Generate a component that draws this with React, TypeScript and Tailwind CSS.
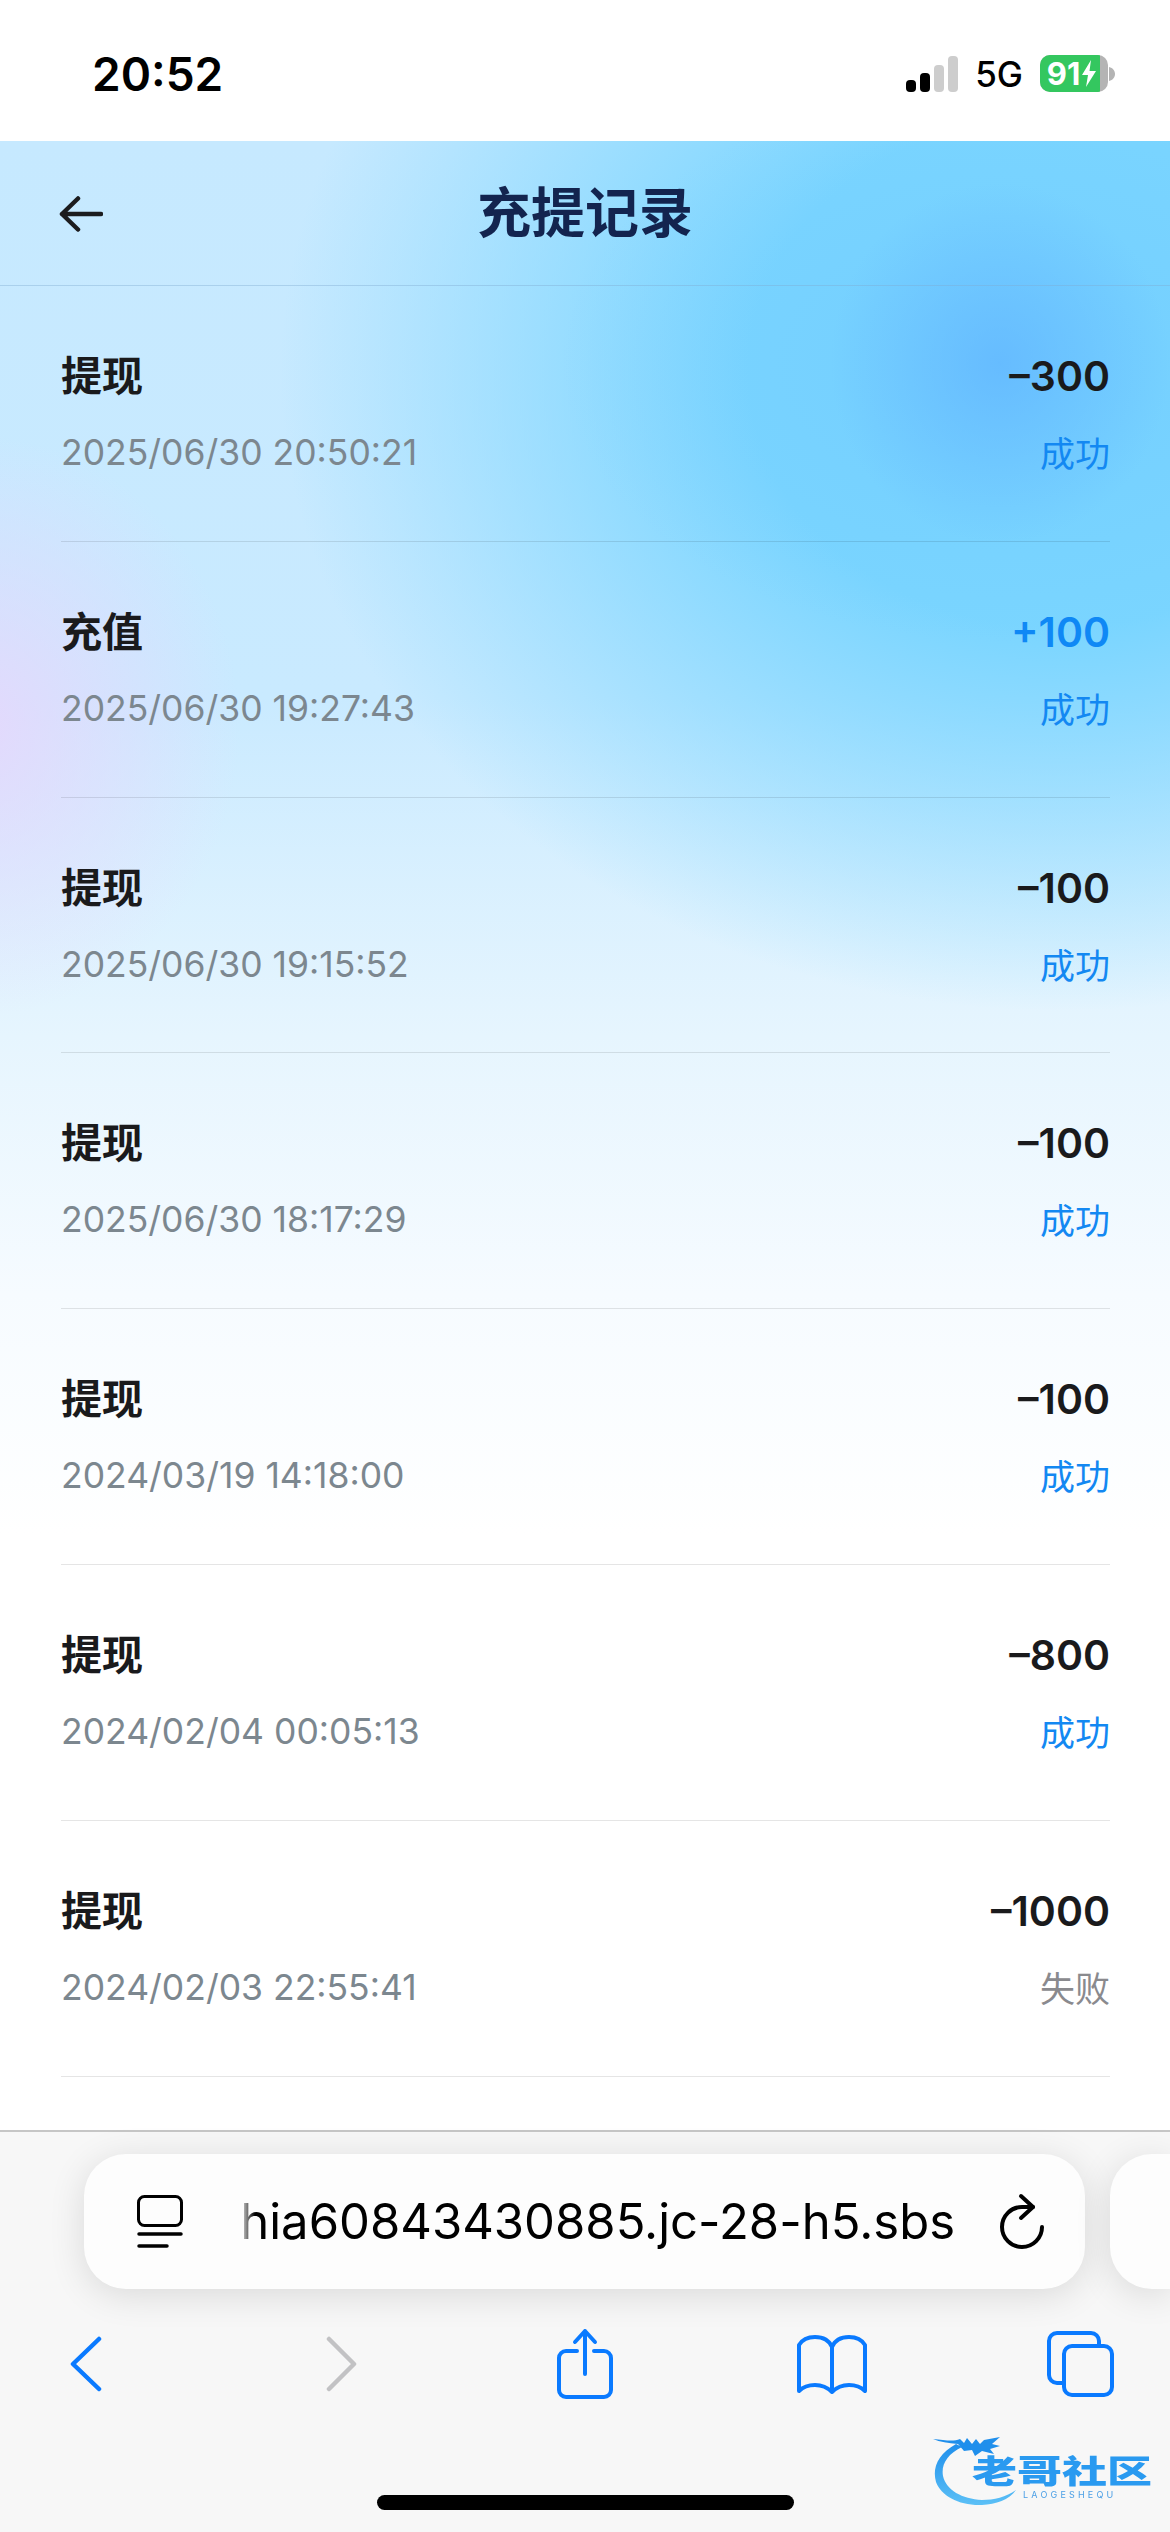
const cjk = 'font-["Noto_Sans_CJK_SC",sans-serif]';
const latin = 'font-["Inter","Noto_Sans_CJK_SC",sans-serif]';

const records = [
  { title: '提现', amount: '–300', time: '2025/06/30 20:50:21', status: '成功' },
  { title: '充值', amount: '+100', time: '2025/06/30 19:27:43', status: '成功' },
  { title: '提现', amount: '–100', time: '2025/06/30 19:15:52', status: '成功' },
  { title: '提现', amount: '–100', time: '2025/06/30 18:17:29', status: '成功' },
  { title: '提现', amount: '–100', time: '2024/03/19 14:18:00', status: '成功' },
  { title: '提现', amount: '–800', time: '2024/02/04 00:05:13', status: '成功' },
  { title: '提现', amount: '–1000', time: '2024/02/03 22:55:41', status: '失败' },
];

function StatusBar() {
  return (
    <div className={`flex h-[141px] items-start bg-white pl-[92px] pr-[55px] ${latin}`}>
      <span className="mt-[46px] text-[46px] font-semibold leading-[56px] text-black">20:52</span>
      <div className="ml-auto mt-[55px] flex items-center">
        <svg width="52" height="36" viewBox="0 0 52 36">
          <rect x="0" y="24" width="10" height="12" rx="4" fill="#000" />
          <rect x="14" y="17" width="10" height="19" rx="4" fill="#000" />
          <rect x="28" y="9" width="10" height="27" rx="4" fill="#cdcdcd" />
          <rect x="42" y="0" width="10" height="36" rx="4" fill="#cdcdcd" />
        </svg>
        <span className="ml-[17px] text-[35px] font-medium leading-[36px] text-black">5G</span>
        <div className="ml-[17px] flex items-center">
          <div className="flex h-[37px] w-[68px] overflow-hidden rounded-[10px] bg-[#b4b4b4]">
            <div className="flex w-[60px] items-center justify-center gap-[1px] bg-[#34c75f] pl-[4px]">
              <span className="text-[31px] font-bold leading-[37px] text-white">91</span>
              <svg width="16" height="27" viewBox="0 0 16 27">
                <path d="M10 0 1 15h6l-2 12 10-16H8.500z" fill="#fff" />
              </svg>
            </div>
          </div>
          <svg width="6" height="14" viewBox="0 0 6 14" className="ml-[1px]">
            <path d="M0 0c4 1 6 4 6 7s-2 6-6 7z" fill="#b4b4b4" />
          </svg>
        </div>
      </div>
    </div>
  );
}

function Header() {
  return (
    <div className="relative flex h-[145px] items-center justify-center border-b border-[#7fa9cf]/40 pb-[6px]">
      <svg
        width="44"
        height="36"
        viewBox="0 0 44 36"
        fill="none"
        stroke="#1c1c1e"
        strokeWidth="4.500"
        strokeLinecap="round"
        strokeLinejoin="round"
        className="absolute left-[59px] top-[55px]"
      >
        <path d="M19 2.500 3 18l16 15.500M3 18h39" />
      </svg>
      <h1 className={`text-[54px] font-bold leading-[64px] text-[#13244f] ${cjk}`}>充提记录</h1>
    </div>
  );
}

function RecordRow({ title, amount, time, status }: (typeof records)[number]) {
  const income = amount.startsWith('+');
  return (
    <div className="flex h-[255.800px] flex-col border-b border-[#000]/10 pt-[62px]">
      <div className="flex items-start justify-between">
        <span className={`text-[41px] font-bold leading-[50px] text-[#1a1a1c] ${cjk}`}>{title}</span>
        <span
          className={`text-[41px] font-semibold leading-[56px] ${latin} ${income ? 'text-[#0f88f5]' : 'text-[#1a1a1c]'}`}
        >
          {amount}
        </span>
      </div>
      <div className="mt-[28px] flex items-start justify-between">
        <span className={`text-[35.500px] leading-[42px] text-[#7c878f] ${latin}`}>{time}</span>
        <span
          className={`text-[35px] leading-[39px] ${cjk} ${status === '成功' ? 'text-[#1388f2]' : 'text-[#8a8a8e]'}`}
        >
          {status}
        </span>
      </div>
    </div>
  );
}

function AddressBar() {
  return (
    <div className="flex items-stretch gap-[25px] pl-[84px]">
      <div className="flex h-[135px] w-[1001px] shrink-0 items-center rounded-[42px] bg-[#fdfdfd] pl-[53px] pr-[39px] shadow-[0_6px_36px_rgba(0,0,0,0.12)]">
        <svg width="46" height="54" viewBox="0 0 46 54" fill="none" stroke="#000" strokeLinecap="round">
          <rect x="1.500" y="1.500" width="43" height="29" rx="6" strokeWidth="3" />
          <path d="M2 39h42" strokeWidth="3.500" />
          <path d="M2 51h28" strokeWidth="3.500" />
        </svg>
        <div className={`relative ml-[56px] flex w-[716px] justify-end whitespace-nowrap text-[49px] leading-[62px] text-black ${latin}`}>
          <span className="shrink-0">hia60843430885.jc-28-h5.sbs</span>
          <div className="absolute inset-y-0 left-0 w-[16px] bg-gradient-to-r from-[#fdfdfd] to-transparent" />
        </div>
        <svg
          width="48"
          height="58"
          viewBox="0 0 48 58"
          fill="none"
          stroke="#000"
          strokeWidth="4"
          strokeLinecap="round"
          strokeLinejoin="round"
          className="ml-auto"
        >
          <path d="M35 14H24A20 20 0 1 0 44 34" />
          <path d="M23 3l12 11-12 11" />
        </svg>
      </div>
      <div className="h-[135px] flex-1 rounded-l-[42px] bg-[#fdfdfd] shadow-[0_6px_36px_rgba(0,0,0,0.12)]" />
    </div>
  );
}

function Toolbar() {
  return (
    <div className="mt-[37px] flex h-[76px] items-center pl-[70px]">
      <svg width="32" height="56" viewBox="0 0 32 56" fill="none" stroke="#0a7aff" strokeWidth="4.500" strokeLinecap="round" strokeLinejoin="round">
        <path d="M29 3 3 28l26 25" />
      </svg>
      <svg width="32" height="56" viewBox="0 0 32 56" fill="none" stroke="#c2c2c4" strokeWidth="4.500" strokeLinecap="round" strokeLinejoin="round" className="ml-[223px]">
        <path d="M4 3l25 25L4 53" />
      </svg>
      <svg width="58" height="72" viewBox="0 0 58 72" fill="none" stroke="#0a7aff" strokeWidth="4" strokeLinecap="round" strokeLinejoin="round" className="ml-[199px]">
        <path d="M21 23H10a7 7 0 0 0-7 7v32a7 7 0 0 0 7 7h38a7 7 0 0 0 7-7V30a7 7 0 0 0-7-7H38" />
        <path d="M29 46V3M19 14 29 3l10 11" />
      </svg>
      <svg width="72" height="60" viewBox="0 0 72 60" fill="none" stroke="#0a7aff" strokeWidth="4" strokeLinecap="round" strokeLinejoin="round" className="ml-[182px]">
        <path d="M36 13C33 6 26 3 19 3 12 3 6 6 3 11v46c4-4 10-6 16-6 8 0 13 3 17 7 4-4 9-7 17-7 6 0 12 2 16 6V11C66 6 60 3 53 3c-7 0-14 3-17 10zM36 13v44" />
      </svg>
      <svg width="68" height="68" viewBox="0 0 68 68" fill="none" stroke="#0a7aff" strokeWidth="4" strokeLinecap="round" strokeLinejoin="round" className="ml-[178px]">
        <path d="M16 53h-5a8 8 0 0 1-8-8V11a8 8 0 0 1 8-8h34a8 8 0 0 1 8 8v4" />
        <rect x="18" y="16" width="48" height="49" rx="8" />
      </svg>
    </div>
  );
}

// Community watermark sitting over the browser toolbar corner
function Watermark() {
  return (
    <div className="absolute left-[930px] top-[2428px] h-[82px] w-[228px] blur-[0.6px]">
      <svg width="120" height="82" viewBox="0 0 120 82" fill="none">
        <defs>
          <linearGradient id="dragonBody" x1="0" y1="0" x2="0" y2="1">
            <stop offset="0" stopColor="#1f8fec" />
            <stop offset="1" stopColor="#5cc0f6" />
          </linearGradient>
        </defs>
        <path d="M26 16C8 26 2 40 6 54c5 14 24 24 46 23 14-1 27-5 34-15-10 7-22 10-34 10C32 71 16 62 13 48 11 37 17 26 32 19z" fill="url(#dragonBody)" />
        <path d="M3 11c12 1 20 3 27 0l4 4 3-5 5 6 4-5 4 5 4-4 16-3-8 7 8 2-10 3 4 5-12-3-7 5-3-6-8 1-6-7C18 15 10 14 3 11z" fill="#1f8fec" />
      </svg>
      <div className={`absolute left-[42px] top-[24px] origin-top-left scale-y-[0.72] whitespace-nowrap text-[45px] font-black leading-[48px] text-[#2a9af0] ${cjk}`}>
        老哥社区
      </div>
      <div className={`absolute left-[93px] top-[61px] whitespace-nowrap text-[9px] leading-[12px] tracking-[3.200px] text-[#4a9fe6] ${latin}`}>
        LAOGESHEQU
      </div>
    </div>
  );
}

export default function App() {
  return (
    <div className="relative flex h-[2532px] w-[1170px] flex-col overflow-hidden bg-white">
      <StatusBar />
      <main className="h-[1989px] bg-[radial-gradient(ellipse_170px_180px_at_1000px_222px,rgba(96,180,255,0.7),rgba(96,180,255,0)_100%),radial-gradient(ellipse_440px_280px_at_1000px_222px,rgba(100,190,255,0.28),rgba(100,190,255,0)_100%),radial-gradient(ellipse_260px_290px_at_-20px_585px,rgba(230,215,252,0.9),rgba(230,215,252,0)_100%),radial-gradient(ellipse_780px_640px_at_1060px_230px,rgba(122,213,255,1)_40%,rgba(122,213,255,0)_100%),linear-gradient(180deg,#c6e9ff_0%,#c9eaff_28%,#e6f5fe_45%,#f6fbff_58%,#ffffff_70%)]">
        <Header />
        <div className="px-[61px] [&>div]:w-[1049px]">
          {records.map((r) => (
            <RecordRow key={r.time} {...r} />
          ))}
        </div>
      </main>
      <footer className="flex-1 border-t-2 border-[#c6c6c6] bg-[#f7f7f7] pt-[22px]">
        <AddressBar />
        <Toolbar />
        <div className="mx-auto mt-[93px] h-[15px] w-[417px] rounded-full bg-black" />
      </footer>
      <Watermark />
    </div>
  );
}
